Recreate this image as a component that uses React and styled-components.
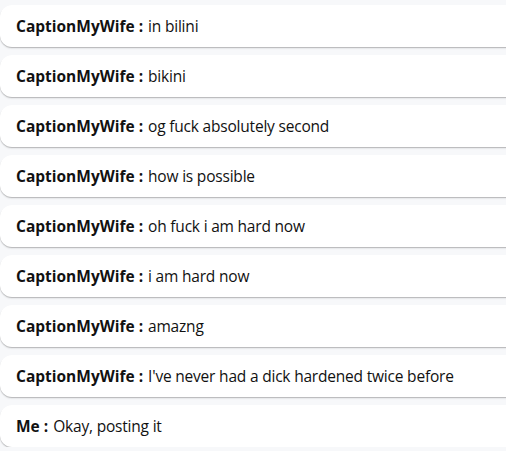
import React from "react";
import styled, { createGlobalStyle } from "styled-components";

const Global = createGlobalStyle`
  html, body { margin: 0; padding: 0; background: #f7f8fa; }
  body { font-family: "Open Sans", "Noto Sans", sans-serif; }
`;

const List = styled.div`
  display: flex;
  flex-direction: column;
  gap: 8px;
  padding: 5px 0 0 0;
  width: 520px;
`;

const Bubble = styled.div`
  height: 42px;
  box-sizing: border-box;
  display: flex;
  align-items: center;
  padding-left: 16px;
  background: #ffffff;
  border-radius: 12px 0 0 12px;
  box-shadow: 0 1px 1px rgba(0, 0, 0, 0.22), 0 2px 2px rgba(0, 0, 0, 0.05);
  font-size: 15.5px;
  letter-spacing: -0.2px;
  color: #111;
  white-space: nowrap;
`;

const Author = styled.span`
  font-weight: 700;
  letter-spacing: 0;
  margin-right: 5px;
`;

const messages = [
  ["CaptionMyWife", "in bilini"],
  ["CaptionMyWife", "bikini"],
  ["CaptionMyWife", "og fuck absolutely second"],
  ["CaptionMyWife", "how is possible"],
  ["CaptionMyWife", "oh fuck i am hard now"],
  ["CaptionMyWife", "i am hard now"],
  ["CaptionMyWife", "amazng"],
  ["CaptionMyWife", "I've never had a dick hardened twice before"],
  ["Me", "Okay, posting it"],
];

export default function App() {
  return (
    <>
      <Global />
      <List>
        {messages.map(([who, text], i) => (
          <Bubble key={i}>
            <Author>{who} :</Author>
            {text}
          </Bubble>
        ))}
      </List>
    </>
  );
}
